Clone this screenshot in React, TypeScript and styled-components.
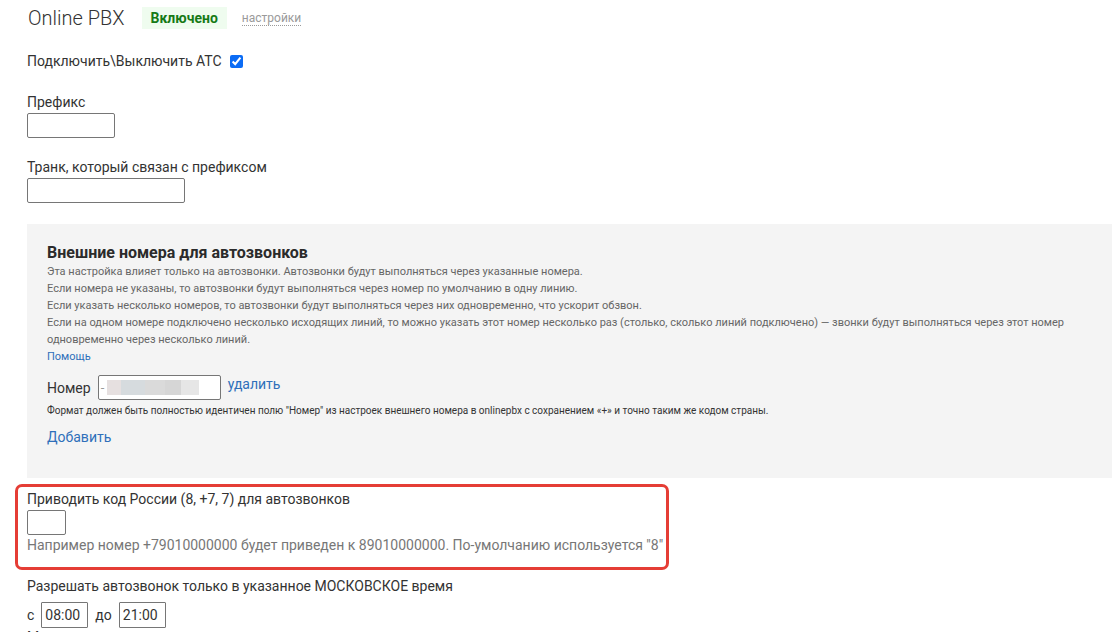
import React from "react";
import styled, { createGlobalStyle } from "styled-components";

const GlobalStyle = createGlobalStyle`
  html, body {
    margin: 0;
    padding: 0;
    background: #ffffff;
    overflow: hidden;
  }
  body {
    font-family: Roboto, "Liberation Sans", Arial, sans-serif;
    color: #333333;
  }
`;

const Page = styled.div`
  width: 1112px;
  height: 632px;
  overflow: hidden;
  padding: 7px 0 0 27px;
  box-sizing: border-box;
`;

const Header = styled.div`
  display: flex;
  align-items: center;
  height: 22px;
`;

const Title = styled.h1`
  margin: 0 0 0 1px;
  font-size: 20px;
  font-weight: 300;
  color: #333;
  line-height: 22px;
`;

const Badge = styled.span`
  margin-left: 17px;
  background: #effcef;
  color: #167a16;
  font-weight: 700;
  font-size: 14px;
  line-height: 22px;
  padding: 0 9px;
`;

const DottedLink = styled.a`
  margin-left: 15px;
  margin-top: 2px;
  font-size: 12px;
  color: #9a9a9a;
  text-decoration: none;
  border-bottom: 1px dotted #9a9a9a;
  line-height: 13px;
`;

const Text = styled.div<{ $top?: number; $size?: number; $color?: string }>`
  margin-top: ${({ $top }) => $top ?? 0}px;
  font-size: ${({ $size }) => $size ?? 14}px;
  line-height: ${({ $size }) => ($size ?? 14) + 3}px;
  color: ${({ $color }) => $color ?? "#333"};
  white-space: nowrap;
`;

const CheckRow = styled.label`
  display: flex;
  align-items: center;
  gap: 8px;
  margin-top: 24px;
  font-size: 14px;
  line-height: 17px;
`;

const Check = styled.input`
  margin: 0;
  width: 13px;
  height: 13px;
  accent-color: #0b6cf5;
`;

const Field = styled.input<{ $w: number; $h?: number }>`
  display: block;
  width: ${({ $w }) => $w}px;
  height: ${({ $h }) => $h ?? 25}px;
  box-sizing: border-box;
  border: 1px solid #767676;
  border-radius: 2px;
  background: #fff;
  font-family: inherit;
  font-size: 14px;
  color: #333;
  padding: 0 4px;
  margin: 2px 0 0;
  outline: none;
`;

const Panel = styled.section`
  margin-top: 21px;
  width: 1100px;
  background: #f4f4f4;
  padding: 19px 20px 32px;
  box-sizing: border-box;
`;

const PanelTitle = styled.h2`
  margin: 0;
  font-size: 16px;
  font-weight: 700;
  line-height: 20px;
  color: #2b2b2b;
`;

const Note = styled.p`
  margin: 0;
  font-size: 11px;
  line-height: 17px;
  color: #666;
  white-space: nowrap;
`;

const Link = styled.a<{ $size?: number; $top?: number }>`
  display: block;
  width: max-content;
  margin-top: ${({ $top }) => $top ?? 0}px;
  font-size: ${({ $size }) => $size ?? 14}px;
  line-height: ${({ $size }) => ($size ?? 14) + 3}px;
  color: #2e6fba;
  text-decoration: none;
`;

const NumberRow = styled.div`
  display: flex;
  align-items: center;
  margin-top: 11px;
  height: 25px;
  font-size: 14px;
`;

const NumberBox = styled.div`
  display: flex;
  align-items: center;
  margin-left: 7px;
  width: 123px;
  height: 25px;
  box-sizing: border-box;
  border: 1px solid #767676;
  border-radius: 2px;
  background: #fff;
  padding-left: 2px;
  color: #999;
  font-size: 13px;
`;

const Blurred = styled.span`
  margin-left: 3px;
  width: 92px;
  height: 15px;
  background: linear-gradient(
    90deg,
    #e6e0e0 0 14px,
    #d6dbde 14px 38px,
    #dadada 38px 58px,
    #d6d6d6 58px 74px,
    #e6e6e6 74px 92px
  );
  filter: blur(0.6px);
`;

const DeleteLink = styled(Link)`
  margin-left: 7px;
  margin-top: -6px;
`;

const Highlight = styled.section`
  margin: 6px 0 0 -12px;
  width: 654px;
  box-sizing: border-box;
  border: 3px solid #e53d35;
  border-radius: 7px;
  padding: 4px 9px 13px;
`;

const TimeRow = styled.div`
  display: flex;
  align-items: center;
  gap: 7px;
  margin-top: 7px;
  font-size: 14px;
`;

const TimeField = styled.input`
  width: 47px;
  height: 26px;
  box-sizing: border-box;
  border: 1px solid #767676;
  border-radius: 1px;
  font-family: inherit;
  font-size: 14px;
  color: #333;
  padding: 0 3px;
  outline: none;
`;

export default function App() {
  return (
    <>
      <GlobalStyle />
      <Page>
        <Header>
          <Title>Online PBX</Title>
          <Badge>Включено</Badge>
          <DottedLink href="#">настройки</DottedLink>
        </Header>

        <CheckRow>
          Подключить\Выключить АТС
          <Check type="checkbox" defaultChecked />
        </CheckRow>

        <Text $top={24}>Префикс</Text>
        <Field $w={88} />

        <Text $top={21}>Транк, который связан с префиксом</Text>
        <Field $w={158} />

        <Panel>
          <PanelTitle>Внешние номера для автозвонков</PanelTitle>
          <Note>Эта настройка влияет только на автозвонки. Автозвонки будут выполняться через указанные номера.</Note>
          <Note>Если номера не указаны, то автозвонки будут выполняться через номер по умолчанию в одну линию.</Note>
          <Note>Если указать несколько номеров, то автозвонки будут выполняться через них одновременно, что ускорит обзвон.</Note>
          <Note>
            Если на одном номере подключено несколько исходящих линий, то можно указать этот номер несколько раз
            (столько, сколько линий подключено) — звонки будут выполняться через этот номер
            <br />
            одновременно через несколько линий.
          </Note>
          <Link href="#" $size={11} $top={2}>Помощь</Link>

          <NumberRow>
            Номер
            <NumberBox>
              -<Blurred />
            </NumberBox>
            <DeleteLink href="#">удалить</DeleteLink>
          </NumberRow>
          <Text $top={4} $size={10}>
            Формат должен быть полностью идентичен полю "Номер" из настроек внешнего номера в onlinepbx с сохранением «+» и
            точно таким же кодом страны.
          </Text>
          <Link href="#" $top={12}>Добавить</Link>
        </Panel>

        <Highlight>
          <Text>Приводить код России (8, +7, 7) для автозвонков</Text>
          <Field $w={39} />
          <Text $top={2} $color="#777">
            Например номер +79010000000 будет приведен к 89010000000. По-умолчанию используется "8"
          </Text>
        </Highlight>

        <Text $top={8}>Разрешать автозвонок только в указанное МОСКОВСКОЕ время</Text>
        <TimeRow>
          <span>с</span>
          <TimeField defaultValue="08:00" />
          <span>до</span>
          <TimeField defaultValue="21:00" />
        </TimeRow>
        <Text $top={1}>Максимальное количество одновременных звонков</Text>
      </Page>
    </>
  );
}
